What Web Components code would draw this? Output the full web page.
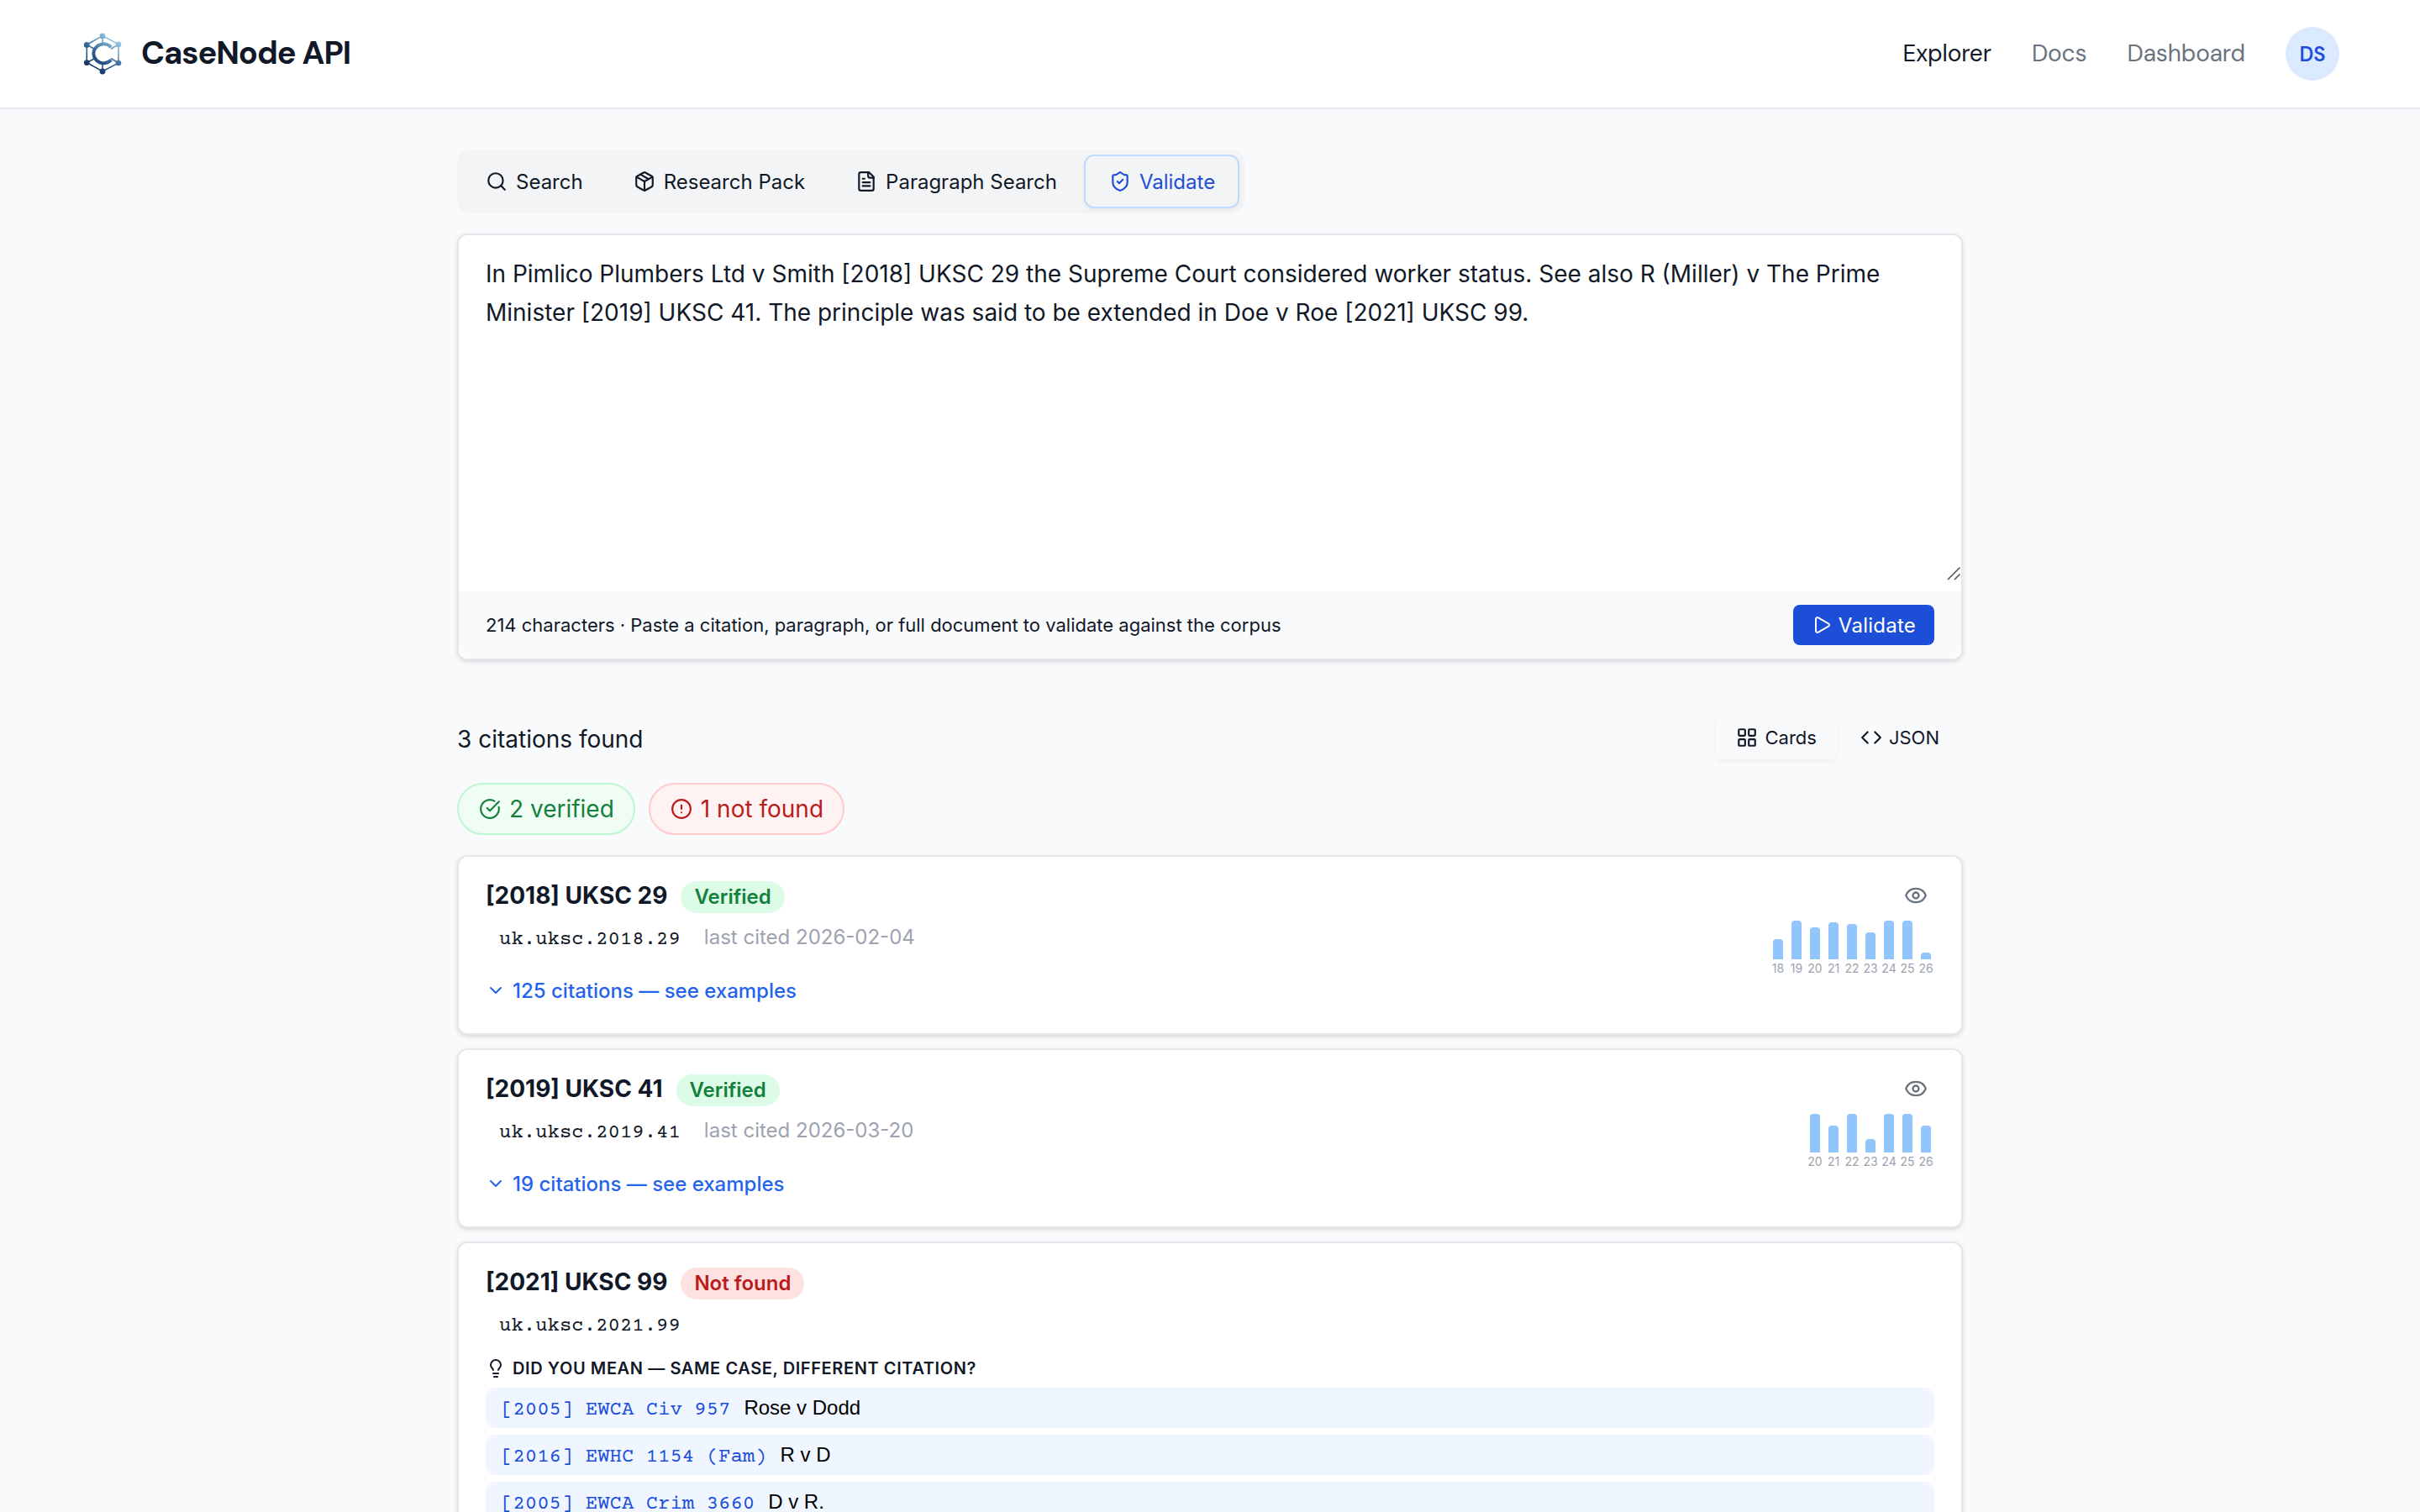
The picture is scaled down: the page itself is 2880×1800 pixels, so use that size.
<!DOCTYPE html>
<html lang="en">
<head>
<meta charset="utf-8">
<title>CaseNode API</title>
<style>
  html {
    height: 100%;
    overflow: hidden;
  }

  body {
    margin: 0;
    height: 100%;
    overflow: hidden;
    background: #f9fafc;
    color: #111827;
    font-family: Inter, "Liberation Sans", sans-serif;
    font-size: 28px;
  }

  main {
    display: flex;
    flex-direction: column;
    width: 1792px;
    margin: 0 auto;
    padding-top: 48px;
  }

  cn-editor {
    margin-top: 24px;
  }

  cn-results-bar {
    margin-top: 62px;
  }

  .summary {
    display: flex;
    gap: 16px;
    margin: 24px 0;
  }

  .cards {
    display: flex;
    flex-direction: column;
    gap: 16px;
  }
</style>
</head>
<body>
<cn-header>
  <cn-nav-link slot="nav" current>Explorer</cn-nav-link>
  <cn-nav-link slot="nav">Docs</cn-nav-link>
  <cn-nav-link slot="nav">Dashboard</cn-nav-link>
  <cn-avatar slot="nav">DS</cn-avatar>
</cn-header>
<main>
  <cn-tabs>
    <cn-tab icon="search">Search</cn-tab>
    <cn-tab icon="package">Research Pack</cn-tab>
    <cn-tab icon="file">Paragraph Search</cn-tab>
    <cn-tab icon="shield" active>Validate</cn-tab>
  </cn-tabs>

  <cn-editor>
    In Pimlico Plumbers Ltd v Smith [2018] UKSC 29 the Supreme Court considered worker status. See also R (Miller) v The Prime Minister [2019] UKSC 41. The principle was said to be extended in Doe v Roe [2021] UKSC 99.
    <span slot="hint">214 characters · Paste a citation, paragraph, or full document to validate against the corpus</span>
    <cn-button slot="action" icon="play">Validate</cn-button>
  </cn-editor>

  <cn-results-bar>
    3 citations found
    <cn-view-option slot="views" icon="grid" active>Cards</cn-view-option>
    <cn-view-option slot="views" icon="code">JSON</cn-view-option>
  </cn-results-bar>

  <div class="summary">
    <cn-pill icon="check" tone="good">2 verified</cn-pill>
    <cn-pill icon="alert" tone="bad">1 not found</cn-pill>
  </div>

  <div class="cards">
    <cn-citation neutral="uk.uksc.2018.29">
      [2018] UKSC 29
      <cn-badge slot="badge" tone="good">Verified</cn-badge>
      <span slot="cited">last cited 2026-02-04</span>
      <cn-icon slot="aside" name="eye" size="28"></cn-icon>
      <cn-sparkline slot="chart" from="18" values="24 46 38 44 42 32 46 46 8"></cn-sparkline>
      <cn-disclosure slot="details">125 citations — see examples</cn-disclosure>
    </cn-citation>

    <cn-citation neutral="uk.uksc.2019.41">
      [2019] UKSC 41
      <cn-badge slot="badge" tone="good">Verified</cn-badge>
      <span slot="cited">last cited 2026-03-20</span>
      <cn-icon slot="aside" name="eye" size="28"></cn-icon>
      <cn-sparkline slot="chart" from="20" values="46 32 46 16 46 46 32"></cn-sparkline>
      <cn-disclosure slot="details">19 citations — see examples</cn-disclosure>
    </cn-citation>

    <cn-citation neutral="uk.uksc.2021.99">
      [2021] UKSC 99
      <cn-badge slot="badge" tone="bad">Not found</cn-badge>
      <cn-suggestions slot="suggestions" heading="DID YOU MEAN — SAME CASE, DIFFERENT CITATION?">
        <cn-suggestion cite="[2005] EWCA Civ 957">Rose v Dodd</cn-suggestion>
        <cn-suggestion cite="[2016] EWHC 1154 (Fam)">R v D</cn-suggestion>
        <cn-suggestion cite="[2005] EWCA Crim 3660">D v R.</cn-suggestion>
      </cn-suggestions>
    </cn-citation>
  </div>
</main>

<script>
const MONO = '"Courier Prime", "Liberation Mono", monospace';

/** 24-unit stroke icons, keyed by name. */
const ICONS = {
  search: '<circle cx="11" cy="11" r="8"/><path d="m21 21-4.34-4.34"/>',
  package: '<path d="M11 21.73a2 2 0 0 0 2 0l7-4A2 2 0 0 0 21 16V8a2 2 0 0 0-1-1.73l-7-4a2 2 0 0 0-2 0l-7 4A2 2 0 0 0 3 8v8a2 2 0 0 0 1 1.73z"/><path d="M12 22V12"/><path d="M3.29 7 12 12l8.71-5"/><path d="m7.5 4.27 9 5.15"/>',
  file: '<path d="M15 2H6a2 2 0 0 0-2 2v16a2 2 0 0 0 2 2h12a2 2 0 0 0 2-2V7Z"/><path d="M14 2v4a2 2 0 0 0 2 2h4"/><path d="M10 9H8"/><path d="M16 13H8"/><path d="M16 17H8"/>',
  shield: '<path d="M20 13c0 5-3.5 7.5-7.66 8.95a1 1 0 0 1-.67-.01C7.5 20.5 4 18 4 13V6a1 1 0 0 1 1-1c2 0 4.5-1.2 6.24-2.72a1.17 1.17 0 0 1 1.52 0C14.51 3.81 17 5 19 5a1 1 0 0 1 1 1z"/><path d="m9 12 2 2 4-4"/>',
  play: '<path d="M5 5a2 2 0 0 1 3.008-1.728l11.997 6.998a2 2 0 0 1 .003 3.458l-12 7A2 2 0 0 1 5 19z"/>',
  grid: '<rect width="7" height="7" x="3" y="3" rx="1"/><rect width="7" height="7" x="14" y="3" rx="1"/><rect width="7" height="7" x="14" y="14" rx="1"/><rect width="7" height="7" x="3" y="14" rx="1"/>',
  code: '<path d="m16 18 6-6-6-6"/><path d="m8 6-6 6 6 6"/>',
  check: '<path d="M21.801 10A10 10 0 1 1 17 3.335"/><path d="m9 11 3 3L22 4"/>',
  alert: '<circle cx="12" cy="12" r="10"/><path d="M12 8v4"/><path d="M12 16h.01"/>',
  eye: '<path d="M2.062 12.348a1 1 0 0 1 0-.696 10.75 10.75 0 0 1 19.876 0 1 1 0 0 1 0 .696 10.75 10.75 0 0 1-19.876 0"/><circle cx="12" cy="12" r="3"/>',
  chevron: '<path d="m6 9 6 6 6-6"/>',
  bulb: '<path d="M15 14c.2-1 .7-1.7 1.5-2.5 1-.9 1.5-2.2 1.5-3.5A6 6 0 0 0 6 8c0 1 .2 2.2 1.5 3.5.7.7 1.3 1.5 1.5 2.5"/><path d="M9 18h6"/><path d="M10 22h4"/>',
};

/** Registers an element whose shadow root is filled from render(host). */
function define(name, render) {
  customElements.define(name, class extends HTMLElement {
    constructor() {
      super();
      this.attachShadow({ mode: "open" });
    }

    connectedCallback() {
      const template = document.createElement("template");
      template.innerHTML = render(this);
      this.shadowRoot.replaceChildren(document.importNode(template.content, true));
    }
  });
}

define("cn-icon", (el) => {
  const size = el.getAttribute("size") || 26;
  return `
<style>
  :host { display: block; flex: none; width: ${size}px; height: ${size}px; }
  svg { display: block; }
</style>
<svg width="${size}" height="${size}" viewBox="0 0 24 24" fill="none" stroke="currentColor"
  stroke-width="2" stroke-linecap="round" stroke-linejoin="round">${ICONS[el.getAttribute("name")]}</svg>`;
});

define("cn-logo", () => `
<style>
  :host { display: block; width: 52px; height: 52px; }
  svg { display: block; }
</style>
<svg width="52" height="52" viewBox="0 0 52 52">
  <defs>
    <linearGradient id="g" gradientUnits="userSpaceOnUse" x1="14" y1="46" x2="40" y2="9">
      <stop offset="0" stop-color="#12305f"/>
      <stop offset=".45" stop-color="#2f6494"/>
      <stop offset="1" stop-color="#93c6e2"/>
    </linearGradient>
  </defs>
  <g fill="none" stroke="url(#g)" stroke-width="1.5">
    <path d="M26 4.7 45 14.7 45.01 37 26 47 7.3 36.5 7.29 15.3Z"/>
    <path d="M7.3 15.3 16 20M7.3 36.5 16 32M26 4.7 26.1 15M26 47 26.1 37"/>
    <path stroke-width="3.9" d="M36.3 18.2A12 11.4 0 1 0 36.3 33.4"/>
    <path stroke-width="1.8" d="M36 20.2 45 14.7M36 31.6 45 37"/>
  </g>
  <g fill="url(#g)">
    <circle cx="26" cy="4.9" r="3.3"/><circle cx="45" cy="14.9" r="3.3"/>
    <circle cx="45" cy="37" r="3.3"/><circle cx="26" cy="47" r="3.4"/>
    <circle cx="7.3" cy="36.6" r="3.4"/><circle cx="7.3" cy="15.4" r="3.4"/>
  </g>
</svg>`);

define("cn-header", () => `
<style>
  :host {
    display: flex;
    align-items: center;
    justify-content: space-between;
    height: 128px;
    padding: 0 96px;
    background: #fff;
    border-bottom: 2px solid #e5e7eb;
    font-family: "DM Sans", Inter, sans-serif;
  }
  .brand { display: flex; align-items: center; gap: 20px; font-size: 38px; font-weight: 700; line-height: 48px; letter-spacing: -1.05px; }
  .brand span { padding-bottom: 2px; }
  nav { display: flex; align-items: center; gap: 48px; }
</style>
<div class="brand"><cn-logo></cn-logo><span>CaseNode API</span></div>
<nav><slot name="nav"></slot></nav>`);

define("cn-nav-link", (el) => `
<style>
  :host { display: block; font-size: 28px; line-height: 40px; letter-spacing: -0.1px; color: ${el.hasAttribute("current") ? "#111827" : "#6b7280"}; }
</style>
<slot></slot>`);

define("cn-avatar", () => `
<style>
  :host {
    display: flex;
    align-items: center;
    justify-content: center;
    width: 64px;
    height: 64px;
    border-radius: 50%;
    background: #dbeafe;
    color: #1d4ed8;
    font-size: 24px;
    font-weight: 600;
  }
</style>
<slot></slot>`);

define("cn-tabs", () => `
<style>
  :host { display: flex; align-self: flex-start; gap: 4px; padding: 6px; border-radius: 16px; background: #f3f4f6; }
</style>
<slot></slot>`);

define("cn-tab", (el) => `
<style>
  :host {
    display: flex;
    align-items: center;
    gap: 10px;
    box-sizing: border-box;
    height: 64px;
    padding: 0 26px;
    border: 2px solid transparent;
    border-radius: 12px;
    font-size: 24px;
    white-space: nowrap;
  }
  :host([active]) { padding: 0 27px 0 28px; color: #1d4ed8; border-color: #bfdbfe; box-shadow: 0 2px 4px rgba(0, 0, 0, .05); }
</style>
<cn-icon name="${el.getAttribute("icon")}"></cn-icon><slot></slot>`);

define("cn-editor", () => `
<style>
  :host {
    display: block;
    box-sizing: border-box;
    height: 508px;
    border: 2px solid #e5e7eb;
    border-radius: 12px;
    background: #fff;
    box-shadow: 0 2px 6px rgba(0, 0, 0, .1), 0 2px 4px -2px rgba(0, 0, 0, .1);
  }
  .text { position: relative; box-sizing: border-box; height: 424px; padding: 23px 32px; line-height: 46.2px; }
  .grip { position: absolute; right: 0; bottom: 12px; }
  footer {
    display: flex;
    align-items: center;
    justify-content: space-between;
    height: 80px;
    padding: 0 32px;
    border-radius: 0 0 16px 16px;
    background: #f9fafc;
    font-size: 22px;
  }
</style>
<div class="text">
  <slot></slot>
  <svg class="grip" width="18" height="18" viewBox="0 0 18 18" stroke="#555" stroke-width="1.6"><path d="M2 16 16.5 1.5M10 16l6.5-6.5"/></svg>
</div>
<footer><slot name="hint"></slot><slot name="action"></slot></footer>`);

define("cn-button", (el) => `
<style>
  :host {
    display: flex;
    align-items: center;
    gap: 8px;
    height: 48px;
    padding: 0 22px;
    border-radius: 8px;
    background: #1d4ed8;
    color: #fff;
    font-size: 24px;
    letter-spacing: 0.24px;
  }
</style>
<cn-icon name="${el.getAttribute("icon")}" size="24"></cn-icon><slot></slot>`);

define("cn-results-bar", () => `
<style>
  :host { display: flex; align-items: center; justify-content: space-between; height: 60px; }
  .count { padding-top: 4px; }
  .views { display: flex; gap: 4px; padding: 4px; }
</style>
<span class="count"><slot></slot></span>
<div class="views"><slot name="views"></slot></div>`);

define("cn-view-option", (el) => `
<style>
  :host {
    display: flex;
    align-items: center;
    gap: 8px;
    height: 52px;
    padding: 0 24px;
    border-radius: 8px;
    font-size: 22px;
  }
  :host([active]) { box-shadow: 0 2px 4px rgba(0, 0, 0, .05); }
</style>
<cn-icon name="${el.getAttribute("icon")}"></cn-icon><slot></slot>`);

define("cn-pill", (el) => `
<style>
  :host {
    display: flex;
    align-items: center;
    gap: 10px;
    box-sizing: border-box;
    height: 62px;
    padding: 0 23px 0 24px;
    border: 2px solid;
    border-radius: 31px;
  }
  :host([tone="good"]) { color: #15803d; background: #f0fdf4; border-color: #bbf7d0; }
  :host([tone="bad"]) { color: #b91c1c; background: #fef2f2; border-color: #fecaca; }
</style>
<cn-icon name="${el.getAttribute("icon")}"></cn-icon><slot></slot>`);

define("cn-badge", () => `
<style>
  :host { display: block; height: 38px; line-height: 38px; padding: 0 16px; border-radius: 19px; font-size: 24px; font-weight: 600; }
  :host([tone="good"]) { color: #15803d; background: #dcfce7; }
  :host([tone="bad"]) { color: #b91c1c; background: #fee2e2; }
</style>
<slot></slot>`);

/**
 * One checked citation. The unnamed slot is the citation as written,
 * the "neutral" attribute its corpus identifier.
 */
define("cn-citation", (el) => `
<style>
  :host {
    display: flex;
    justify-content: space-between;
    box-sizing: border-box;
    min-height: 214px;
    padding: 26px 32px;
    border: 2px solid #e5e7eb;
    border-radius: 12px;
    background: #fff;
    box-shadow: 0 2px 6px rgba(0, 0, 0, .1), 0 2px 4px -2px rgba(0, 0, 0, .1);
  }
  .body { flex: 1; }
  .title { display: flex; align-items: baseline; gap: 16px; height: 40px; font-weight: 700; line-height: 40px; }
  .meta { display: flex; align-items: baseline; height: 36px; margin-top: 15px; line-height: 36px; font-size: 24px; }
  code { font-family: ${MONO}; padding: 0 16px; margin-right: 12px; }
  .cited { color: #9ca3af; line-height: 30px; }
  aside { display: flex; flex-direction: column; align-items: flex-end; }
  ::slotted(cn-icon) { margin: 6px 8px 0 0; color: #6b7280; }
  ::slotted(cn-sparkline) { margin-top: 16px; }
</style>
<div class="body">
  <div class="title"><span><slot></slot></span><slot name="badge"></slot></div>
  <div class="meta"><code>${el.getAttribute("neutral")}</code><span class="cited"><slot name="cited"></slot></span></div>
  <slot name="details"></slot>
  <slot name="suggestions"></slot>
</div>
<aside><slot name="aside"></slot><slot name="chart"></slot></aside>`);

define("cn-disclosure", () => `
<style>
  :host { display: flex; align-items: center; gap: 8px; height: 36px; margin-top: 24px; color: #2563eb; font-size: 24px; font-weight: 500; }
</style>
<cn-icon name="chevron" size="24"></cn-icon><slot></slot>`);

/** Citations per year; "from" is the first two-digit year, values are bar heights. */
define("cn-sparkline", (el) => {
  const from = Number(el.getAttribute("from"));
  const columns = el.getAttribute("values").split(" ")
    .map((v, i) => `<div><i style="height:${v}px"></i><span>${from + i}</span></div>`);
  return `
<style>
  :host { display: flex; align-items: flex-end; gap: 2px; }
  div { display: flex; flex-direction: column; align-items: center; width: 20px; }
  i { width: 12px; border-radius: 4px 4px 0 0; background: #93c5fd; }
  span { margin-top: 2px; font-size: 14px; line-height: 18px; color: #9ca3af; }
</style>
${columns.join("")}`;
});

define("cn-suggestions", (el) => `
<style>
  :host { display: flex; flex-direction: column; gap: 8px; margin-top: 16px; }
  h3 { display: flex; align-items: center; gap: 8px; height: 31px; margin: 0; font-size: 20px; font-weight: 600; letter-spacing: 0.6px; }
</style>
<h3><cn-icon name="bulb" size="24"></cn-icon>${el.getAttribute("heading")}</h3>
<slot></slot>`);

define("cn-suggestion", (el) => `
<style>
  :host {
    display: flex;
    align-items: baseline;
    gap: 16px;
    height: 48px;
    padding: 0 18px;
    border-radius: 12px;
    background: #eff6ff;
    color: #000;
    font: 24px/48px "Liberation Sans", Arial, sans-serif;
  }
  code { font-family: ${MONO}; color: #1d4ed8; }
</style>
<code>${el.getAttribute("cite")}</code><span><slot></slot></span>`);
</script>
</body>
</html>
